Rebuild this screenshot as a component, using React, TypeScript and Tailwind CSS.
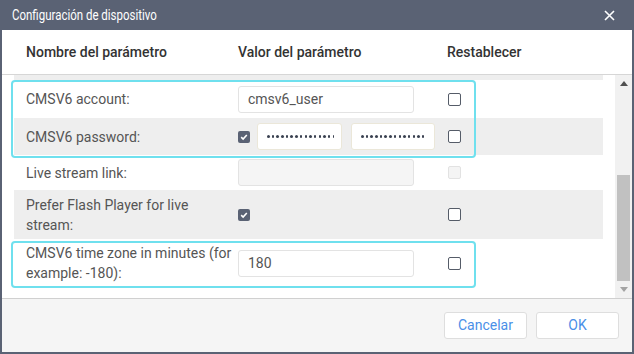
function Check({ checked, disabled }: { checked?: boolean; disabled?: boolean }) {
  if (checked) {
    return (
      <span className="flex h-[12px] w-[12px] items-center justify-center rounded-[2px] bg-[#5a6274]">
        <svg width="8" height="8" viewBox="0 0 8 8">
          <path d="M1.2 4.2 L3.1 6 L6.8 2" fill="none" stroke="white" strokeWidth="1.6" />
        </svg>
      </span>
    );
  }
  if (disabled) {
    return <span className="block h-[13px] w-[13px] rounded-[2px] border border-[#e2e2e2] bg-[#f4f4f4]" />;
  }
  return <span className="block h-[13px] w-[13px] rounded-[2px] border-[1.5px] border-[#555c68] bg-white" />;
}

function TextBox({ value, disabled }: { value?: string; disabled?: boolean }) {
  return (
    <div
      className={`flex h-[27px] w-[176px] items-center rounded-[3px] border px-[9px] text-[14px] text-[#555] ${
        disabled ? "border-[#e3e3e3] bg-[#f5f5f5]" : "border-[#e3e3e3] bg-white"
      }`}
    >
      {value}
    </div>
  );
}

function Dots() {
  return (
    <div className="flex h-[27px] items-center overflow-hidden rounded-[3px] border border-[#ebe7d9] bg-white pl-[9px] pr-[7px]">
      <div className="flex gap-[2.2px] overflow-hidden">
        {Array.from({ length: 16 }).map((_, i) => (
          <span key={i} className="block h-[2.5px] w-[2.5px] shrink-0 rounded-full bg-[#3a4150]" />
        ))}
      </div>
    </div>
  );
}

function Row({
  label,
  gray,
  h,
  children,
  reset,
}: {
  label: string;
  gray?: boolean;
  h: string;
  children?: React.ReactNode;
  reset: React.ReactNode;
}) {
  return (
    <div className={`mx-3 flex items-center pl-3 ${h} ${gray ? "bg-[#eeeeee]" : "bg-white"}`}>
      <div className="w-[212px] pr-1 text-[14px] leading-[20px] text-[#555]">{label}</div>
      <div className="flex w-[210px] items-center">{children}</div>
      <div className="flex items-center">{reset}</div>
    </div>
  );
}

export default function App() {
  return (
    <div className="flex h-[354px] w-[634px] flex-col bg-[#5a6274] px-[2px] pb-[2px] font-['Roboto',sans-serif]">
      <div className="flex h-[30px] items-center justify-between pl-[10px] pr-[17px] text-white">
        <span className="inline-block origin-left scale-x-[0.82] whitespace-nowrap text-[14px]">
          Configuración de dispositivo
        </span>
        <svg width="11" height="11" viewBox="0 0 11 11">
          <path d="M1 1 L10 10 M10 1 L1 10" stroke="white" strokeWidth="1.6" />
        </svg>
      </div>
      <div className="flex flex-1 flex-col bg-white">
        <div className="flex h-[45px] items-center border-b border-[#d6d6d6] pl-6 text-[14px] font-medium text-[#333]">
          <div className="w-[212px]">Nombre del parámetro</div>
          <div className="w-[209px]">Valor del parámetro</div>
          <div>Restablecer</div>
        </div>
        <div className="flex h-[223px]">
          <div className="relative flex-1">
            <div className="mx-3 h-[5px] bg-[#eeeeee]" />
            <Row label="CMSV6 account:" h="h-[38px]" reset={<Check />}>
              <TextBox value="cmsv6_user" />
            </Row>
            <Row label="CMSV6 password:" gray h="h-[37px]" reset={<Check />}>
              <Check checked />
              <div className="ml-[7px] w-[85px]">
                <Dots />
              </div>
              <div className="ml-[9px] w-[84px] shrink-0">
                <Dots />
              </div>
            </Row>
            <Row label="Live stream link:" h="h-[35px]" reset={<Check disabled />}>
              <TextBox disabled />
            </Row>
            <Row label="Prefer Flash Player for live stream:" gray h="h-[49px]" reset={<Check />}>
              <Check checked />
            </Row>
            <Row label="CMSV6 time zone in minutes (for example: -180):" h="h-[48px]" reset={<Check />}>
              <TextBox value="180" />
            </Row>
            <div className="absolute left-[9px] top-[5px] h-[78px] w-[465px] rounded-[4px] border-2 border-[#6fe0ee]" />
            <div className="absolute left-[9px] top-[166px] h-[47px] w-[465px] rounded-[4px] border-2 border-[#6fe0ee]" />
          </div>
          <div className="flex w-[17px] flex-col items-center bg-[#f1f1f1]">
            <div className="flex h-[17px] items-center justify-center">
              <svg width="8" height="5" viewBox="0 0 8 5">
                <path d="M0 5 L4 0 L8 5 Z" fill="#505050" />
              </svg>
            </div>
            <div className="mt-[83px] h-[107px] w-[13px] bg-[#c1c1c1]" />
            <div className="flex h-[17px] items-center justify-center">
              <svg width="8" height="5" viewBox="0 0 8 5">
                <path d="M0 0 L8 0 L4 5 Z" fill="#a3a3a3" />
              </svg>
            </div>
          </div>
        </div>
        <div className="flex flex-1 items-center justify-end gap-[9px] border-t border-[#d0d0d0] bg-[#f5f5f5] pr-[13px]">
          <button className="h-[27px] w-[83px] rounded-[3px] border border-[#dedede] bg-white text-[14px] text-[#4a8fe7]">
            Cancelar
          </button>
          <button className="h-[27px] w-[83px] rounded-[3px] border border-[#dedede] bg-white text-[14px] text-[#4a8fe7]">
            OK
          </button>
        </div>
      </div>
    </div>
  );
}
